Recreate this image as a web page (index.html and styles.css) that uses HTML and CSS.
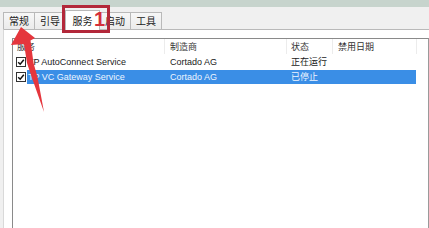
FILE: index.html
```html
<!DOCTYPE html>
<html>
<head>
<meta charset="utf-8">
<link rel="stylesheet" href="styles.css">
</head>
<body>
<div class="window">
  <div class="titlebar"></div>
  <div class="tabstrip">
    <div class="tab">常规</div>
    <div class="tab">引导</div>
    <div class="tab selected">服务</div>
    <div class="tab">启动</div>
    <div class="tab">工具</div>
  </div>
  <div class="panel">
    <div class="listview">
      <div class="header">
        <div class="hcell c-name">服务</div>
        <div class="hcell c-mfr">制造商</div>
        <div class="hcell c-status">状态</div>
        <div class="hcell c-date">禁用日期</div>
        <div class="hcell c-rest"></div>
      </div>
      <div class="row">
        <div class="check"><svg viewBox="0 0 10 10" width="10" height="10"><rect x="0.5" y="0.5" width="9" height="9" fill="#fff" stroke="#333"/><path d="M2.2 5.2 L4.2 7.2 L7.8 2.8" fill="none" stroke="#111" stroke-width="1.5"/></svg></div>
        <div class="cells">
          <div class="cell t-name">TP AutoConnect Service</div>
          <div class="cell t-mfr">Cortado AG</div>
          <div class="cell t-status">正在运行</div>
          <div class="cell t-date"></div>
        </div>
      </div>
      <div class="row">
        <div class="check"><svg viewBox="0 0 10 10" width="10" height="10"><rect x="0.5" y="0.5" width="9" height="9" fill="#fff" stroke="#333"/><path d="M2.2 5.2 L4.2 7.2 L7.8 2.8" fill="none" stroke="#111" stroke-width="1.5"/></svg></div>
        <div class="cells sel">
          <div class="cell t-name">TP VC Gateway Service</div>
          <div class="cell t-mfr">Cortado AG</div>
          <div class="cell t-status">已停止</div>
          <div class="cell t-date"></div>
        </div>
      </div>
    </div>
  </div>
</div>
<div class="callout-box"><span class="callout-num">1</span></div>
<svg class="arrow" width="60" height="120" viewBox="0 0 60 120">
  <polygon points="21,27 35,38 30.5,40.5 33.5,63 37.5,77 44,112 32,78 27,63 24,44 11,45" fill="#e5363d"/>
</svg>
</body>
</html>
```
FILE: styles.css
```css
html, body {
  margin: 0;
  padding: 0;
}
body {
  width: 429px;
  height: 228px;
  overflow: hidden;
  background: #f0f0f0;
  font-family: "Liberation Sans", "Noto Sans CJK SC", sans-serif;
  font-size: 9px;
  color: #1a1a1a;
  position: relative;
}
.window {
  display: flex;
  flex-direction: column;
  height: 228px;
}
.titlebar {
  height: 7px;
  background: #c7d4cd;
  flex: none;
}
.tabstrip {
  height: 22px;
  flex: none;
  display: flex;
  align-items: flex-end;
  padding-left: 3px;
  background: #f0f0f0;
}
.tab {
  height: 16px;
  line-height: 15px;
  width: 30px;
  text-align: center;
  border: 1px solid #b9b9b9;
  border-bottom: none;
  margin-right: -1px;
  background: linear-gradient(#f7f7f7, #ebebeb);
  font-family: "Noto Sans CJK SC", sans-serif;
  font-size: 10px;
  color: #222;
}
.tab.selected {
  height: 19px;
  line-height: 19px;
  width: 33px;
  background: #fff;
  position: relative;
  z-index: 1;
  margin-bottom: -1px;
}
.panel {
  flex: 1;
  background: #fff;
  border-top: 1px solid #b9b9b9;
  border-left: 1px solid #d9d9d9;
  margin-left: 3px;
  padding: 8px 0 0 8px;
  box-sizing: border-box;
  min-height: 0;
}
.listview {
  height: 100%;
  border: 1px solid #8a8a8a;
  border-bottom: none;
  border-right-color: #9a9a9a;
  box-sizing: border-box;
  background: #fff;
}
.header {
  display: grid;
  grid-template-columns: 152px 122px 46px 84px 1fr;
  height: 15px;
}
.hcell {
  border-right: 1px solid #ececec;
  line-height: 15px;
  font-family: "Noto Sans CJK SC", sans-serif;
  font-size: 9px;
  color: #333;
  box-sizing: border-box;
}
.c-name { padding-left: 4px; }
.c-mfr { padding-left: 5px; }
.c-status { padding-left: 4px; }
.c-date { padding-left: 5px; }
.c-rest { border-right: none; }
.row {
  display: flex;
  height: 14px;
  margin-top: 1px;
}
.check {
  width: 14px;
  flex: none;
  display: flex;
  align-items: center;
  padding-left: 3px;
  box-sizing: border-box;
}
.check svg { display: block; }
.cells {
  display: grid;
  grid-template-columns: 138px 122px 46px 83px;
}
.cells.sel {
  background: #3a8ee6;
  color: #eef5ff;
}
.cell {
  line-height: 14px;
  white-space: nowrap;
  overflow: hidden;
  box-sizing: border-box;
}
.t-name { padding-left: 1px; }
.t-mfr { padding-left: 5px; }
.t-status {
  padding-left: 4px;
  font-family: "Noto Sans CJK SC", sans-serif;
  font-size: 9px;
}
.callout-box {
  position: absolute;
  left: 62px;
  top: 5px;
  width: 48px;
  height: 28px;
  border: 3px solid #b3283a;
  box-sizing: border-box;
  z-index: 5;
}
.callout-num {
  position: absolute;
  left: 29px;
  top: 1px;
  font-family: "Liberation Sans", sans-serif;
  font-weight: bold;
  font-size: 20px;
  line-height: 20px;
  color: #d42f3b;
}
.arrow {
  position: absolute;
  left: 0;
  top: 0;
  z-index: 6;
}
```
